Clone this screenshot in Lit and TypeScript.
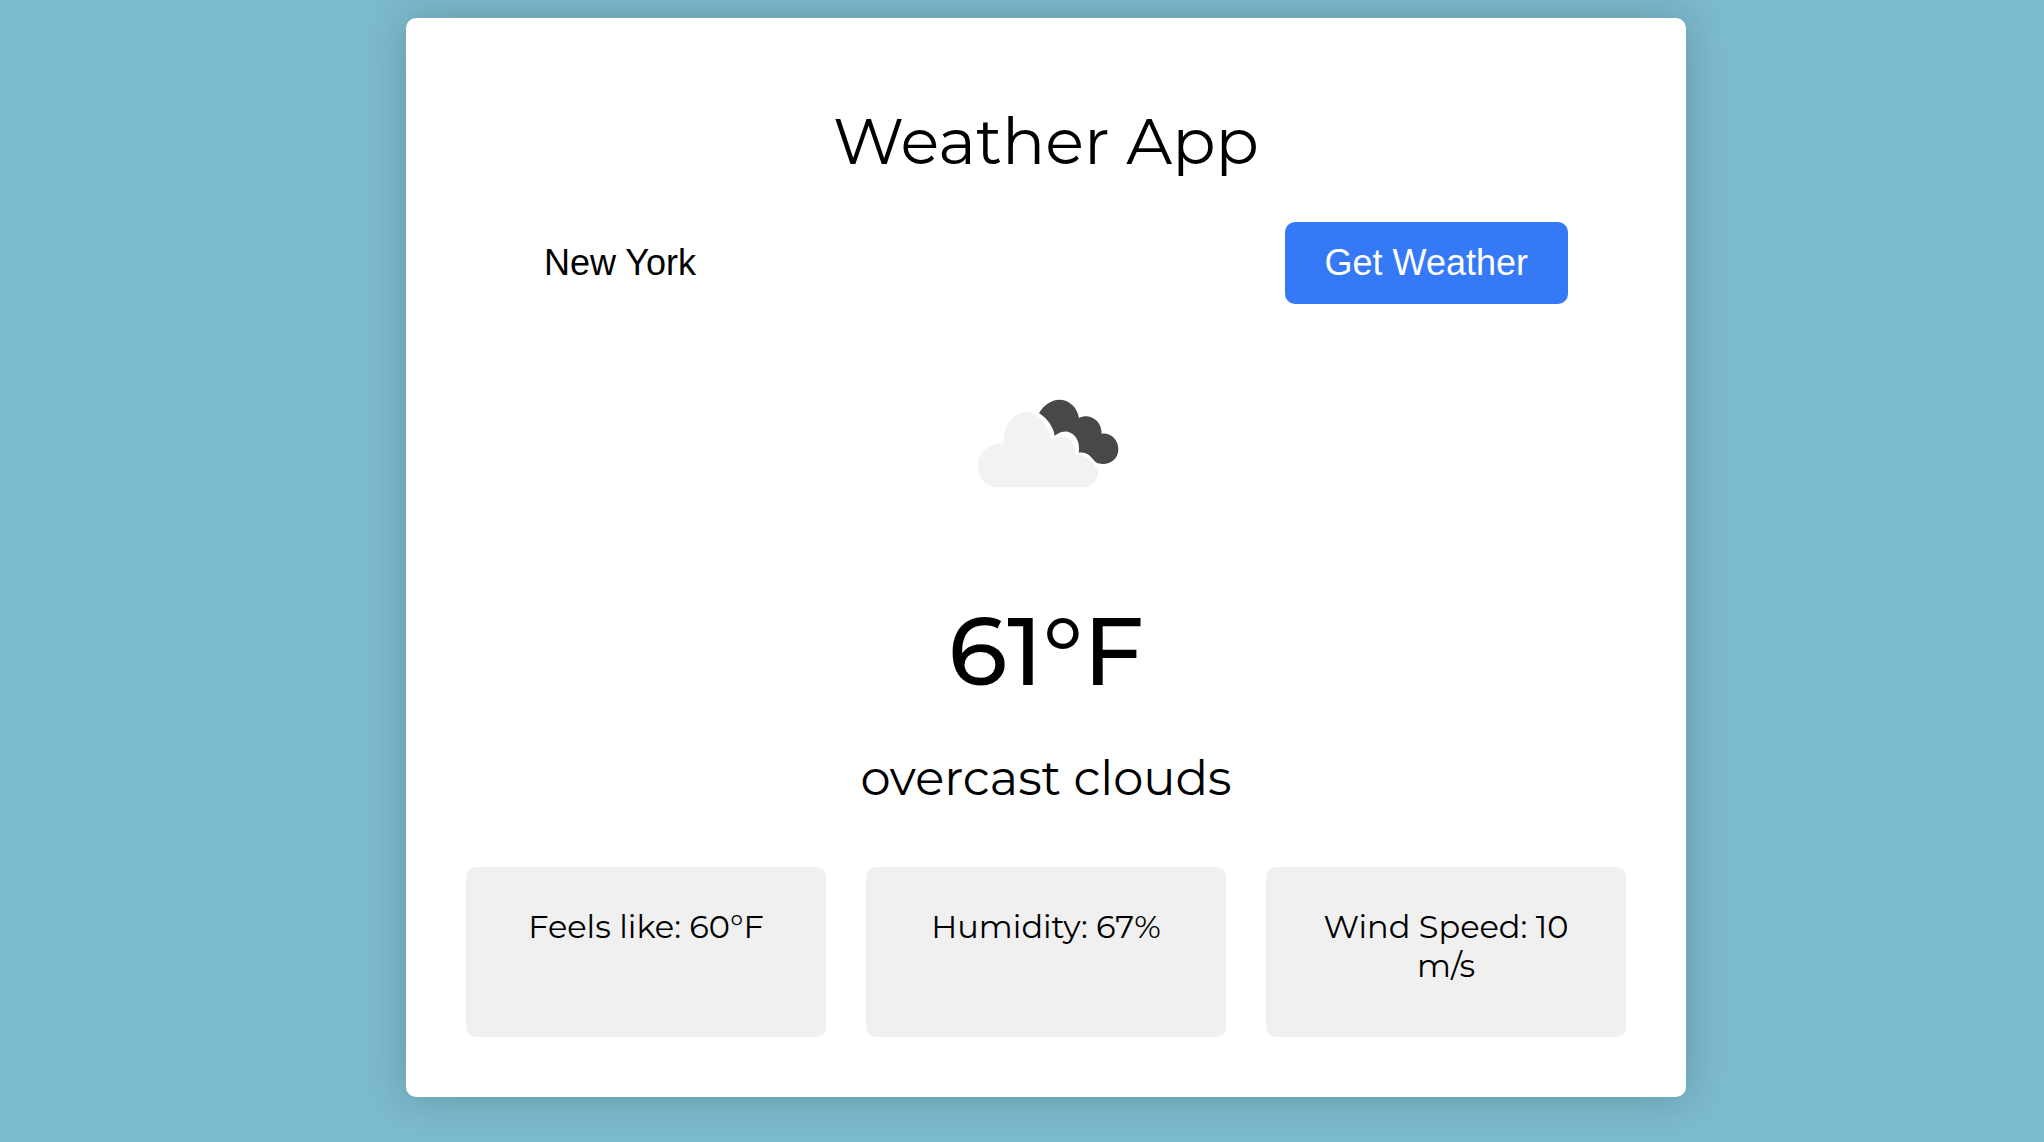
import { LitElement, html, css } from "lit";
import { customElement, property, state } from "lit/decorators.js";

@customElement("weather-detail")
export class WeatherDetail extends LitElement {
  @property() label = "";
  @property() value = "";

  static styles = css`
    :host {
      display: block;
      box-sizing: border-box;
      min-height: 170px;
      padding: 40px;
      border-radius: 10px;
      background: #f0f0f0;
      font-size: 32px;
      line-height: 39px;
      text-align: center;
    }
    .text {
      margin: 0;
    }
  `;

  render() {
    return html`<p class="text">${`${this.label}: ${this.value}`}</p>`;
  }
}

@customElement("app-root")
export class AppRoot extends LitElement {
  @state() private city = "New York";

  private details = [
    { label: "Feels like", value: "60°F" },
    { label: "Humidity", value: "67%" },
    { label: "Wind Speed", value: "10 m/s" },
  ];

  static styles = css`
    :host {
      display: flex;
      align-items: flex-start;
      justify-content: center;
      box-sizing: border-box;
      min-height: 100vh;
      padding: 18px 20px 44px 68px;
      background: #7cbace;
      color: #000;
      font-family: Montserrat, Inter, sans-serif;
    }
    .card {
      box-sizing: border-box;
      width: 100%;
      max-width: 1280px;
      padding: 84px 60px 60px;
      border-radius: 10px;
      background: #fff;
      box-shadow: 0 0 40px rgba(0, 0, 0, 0.2);
      text-align: center;
    }
    .title {
      margin: 0 0 42px;
      font-size: 64px;
      font-weight: 400;
      line-height: 78px;
    }
    .search {
      display: flex;
      gap: 20px;
      margin: 0 58px 39px;
    }
    .city,
    .submit {
      box-sizing: border-box;
      height: 82px;
      border: 0;
      border-radius: 10px;
      font-family: "Liberation Sans", Arial, sans-serif;
      font-size: 36px;
    }
    .city {
      flex: 1;
      min-width: 0;
      padding: 20px;
      background: #fff;
      color: #000;
    }
    .submit {
      padding: 20px 40px;
      background: #3579f7;
      color: #fff;
      cursor: pointer;
    }
    .icon {
      display: block;
      width: 200px;
      height: 200px;
      margin: 0 auto 48px;
    }
    .temperature {
      margin: 0 0 37px;
      font-size: 96px;
      font-weight: 500;
      line-height: 120px;
    }
    .description {
      margin: 0 0 59px;
      font-size: 48px;
      line-height: 60px;
    }
    .details {
      display: grid;
      grid-template-columns: repeat(3, 1fr);
      gap: 40px;
    }
  `;

  private onSubmit(event: Event) {
    event.preventDefault();
  }

  private onInput(event: Event) {
    this.city = (event.target as HTMLInputElement).value;
  }

  render() {
    return html`
      <main class="card">
        <h1 class="title">Weather App</h1>
        <form class="search" @submit=${this.onSubmit}>
          <input class="city" type="text" aria-label="City" .value=${this.city} @input=${this.onInput} />
          <button class="submit" type="submit">Get Weather</button>
        </form>
        <svg class="icon" viewBox="-42 -111 600 600" aria-hidden="true">
          <path
            fill="#48484a"
            d="M237 100C250 75 275 59 297 59C328 59 352 82 357 114C385 98 425 118 425 161C455 158 475 182 475 207C475 236 454 252 428 252C412 252 405 246 399 238C390 225 375 214 356 218C361 190 350 160 322 155C308 154 295 159 284 167C280 140 262 115 237 100Z"
          />
          <path
            fill="#f2f2f2"
            d="M110 322C75 320 54 292 54 258C54 215 90 188 130 190C130 135 160 96 200 96C238 100 266 138 273 180C305 158 348 172 346 226C378 220 404 248 415 280C408 307 392 322 370 322Z"
          />
        </svg>
        <p class="temperature">61°F</p>
        <p class="description">overcast clouds</p>
        <section class="details">
          ${this.details.map(
            (d) => html`<weather-detail .label=${d.label} .value=${d.value}></weather-detail>`
          )}
        </section>
      </main>
    `;
  }
}
